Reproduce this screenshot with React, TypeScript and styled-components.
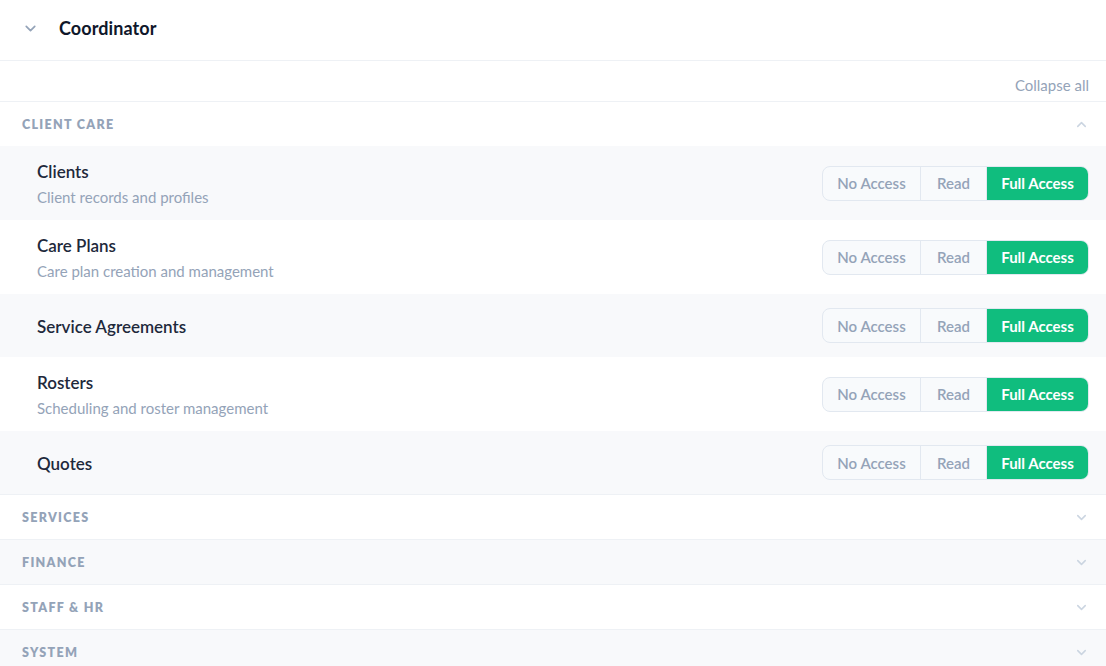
import React from "react";
import styled, { createGlobalStyle } from "styled-components";

const GlobalStyle = createGlobalStyle`
  html, body { margin: 0; padding: 0; background: #ffffff; }
  body { font-family: Lato, "Open Sans", sans-serif; -webkit-font-smoothing: antialiased; }
  * { box-sizing: border-box; }
`;

const Page = styled.div`
  width: 1106px;
  background: #ffffff;
  display: flex;
  flex-direction: column;
`;

const RoleHeader = styled.div`
  height: 61px;
  display: flex;
  align-items: center;
  gap: 20px;
  padding: 0 0 4px 22px;
  border-bottom: 1px solid #eef1f5;
`;

const RoleTitle = styled.h1`
  margin: 0;
  font-size: 18px;
  font-weight: 700;
  color: #0f172a;
  letter-spacing: 0.1px;
`;

const Toolbar = styled.div`
  height: 41px;
  display: flex;
  align-items: center;
  justify-content: flex-end;
  padding: 8px 17px 0 0;
  border-bottom: 1px solid #eef1f5;
`;

const LinkButton = styled.button`
  border: none;
  background: none;
  padding: 0;
  font: inherit;
  font-size: 15px;
  color: #94a3b8;
  cursor: pointer;
`;

const SectionHeader = styled.div<{ $shaded?: boolean; $last?: boolean }>`
  height: ${(p) => (p.$last ? "44px" : "45px")};
  display: flex;
  align-items: center;
  justify-content: space-between;
  padding: 0 17px 0 22px;
  background: ${(p) => (p.$shaded ? "#f8f9fb" : "#ffffff")};
  border-bottom: ${(p) => (p.$last ? "none" : "1px solid #eef1f5")};
`;

const SectionLabel = styled.span`
  font-size: 12.5px;
  font-weight: 800;
  letter-spacing: 1.3px;
  color: #94a3b8;
  text-transform: uppercase;
`;

const Row = styled.div<{ $shaded: boolean; $tall: boolean }>`
  height: ${(p) => (p.$tall ? "74px" : "63px")};
  display: flex;
  align-items: center;
  justify-content: space-between;
  padding: 0 17px 0 37px;
  background: ${(p) => (p.$shaded ? "#f8f9fb" : "#ffffff")};
`;

const RowText = styled.div`
  display: flex;
  flex-direction: column;
  gap: 5px;
  padding-top: 3px;
`;

const RowTitle = styled.div`
  font-size: 17px;
  font-weight: 600;
  color: #1e293b;
  line-height: 20px;
`;

const RowDesc = styled.div`
  font-size: 15px;
  color: #94a3b8;
  line-height: 20px;
`;

const Segmented = styled.div`
  display: flex;
  height: 35px;
  border: 1px solid #e2e8f0;
  border-radius: 8px;
  background: #f8fafc;
  overflow: hidden;
`;

const SegButton = styled.button<{ $active: boolean; $w: number }>`
  width: ${(p) => p.$w}px;
  border: none;
  border-left: 1px solid #e2e8f0;
  &:first-child { border-left: none; }
  background: ${(p) => (p.$active ? "#10bd7e" : "transparent")};
  color: ${(p) => (p.$active ? "#ffffff" : "#94a3b8")};
  font: inherit;
  font-size: 15px;
  font-weight: ${(p) => (p.$active ? 700 : 600)};
  padding: 0;
  cursor: pointer;
`;

const Chevron = ({ dir, color, size }: { dir: "up" | "down"; color: string; size: number }) => (
  <svg width={size} height={size} viewBox="0 0 24 24" fill="none" stroke={color} strokeWidth={2.4} strokeLinecap="round" strokeLinejoin="round">
    {dir === "down" ? <path d="M6 9l6 6 6-6" /> : <path d="M6 15l6-6 6 6" />}
  </svg>
);

const items = [
  { title: "Clients", desc: "Client records and profiles" },
  { title: "Care Plans", desc: "Care plan creation and management" },
  { title: "Service Agreements" },
  { title: "Rosters", desc: "Scheduling and roster management" },
  { title: "Quotes" },
];

const options = [
  { label: "No Access", w: 97 },
  { label: "Read", w: 66 },
  { label: "Full Access", w: 102 },
];

const collapsed = ["Services", "Finance", "Staff & HR", "System"];

export default function App() {
  return (
    <Page>
      <GlobalStyle />
      <RoleHeader>
        <Chevron dir="down" color="#94a3b8" size={17} />
        <RoleTitle>Coordinator</RoleTitle>
      </RoleHeader>
      <Toolbar>
        <LinkButton>Collapse all</LinkButton>
      </Toolbar>
      <SectionHeader $last>
        <SectionLabel>Client Care</SectionLabel>
        <Chevron dir="up" color="#cbd5e1" size={15} />
      </SectionHeader>
      {items.map((it, i) => (
        <Row key={it.title} $shaded={i % 2 === 0} $tall={!!it.desc}>
          <RowText>
            <RowTitle>{it.title}</RowTitle>
            {it.desc && <RowDesc>{it.desc}</RowDesc>}
          </RowText>
          <Segmented>
            {options.map((o) => (
              <SegButton key={o.label} $w={o.w} $active={o.label === "Full Access"}>
                {o.label}
              </SegButton>
            ))}
          </Segmented>
        </Row>
      ))}
      <div style={{ borderTop: "1px solid #eef1f5" }} />
      {collapsed.map((c, i) => (
        <SectionHeader key={c} $shaded={i % 2 === 1}>
          <SectionLabel>{c}</SectionLabel>
          <Chevron dir="down" color="#cbd5e1" size={15} />
        </SectionHeader>
      ))}
    </Page>
  );
}
